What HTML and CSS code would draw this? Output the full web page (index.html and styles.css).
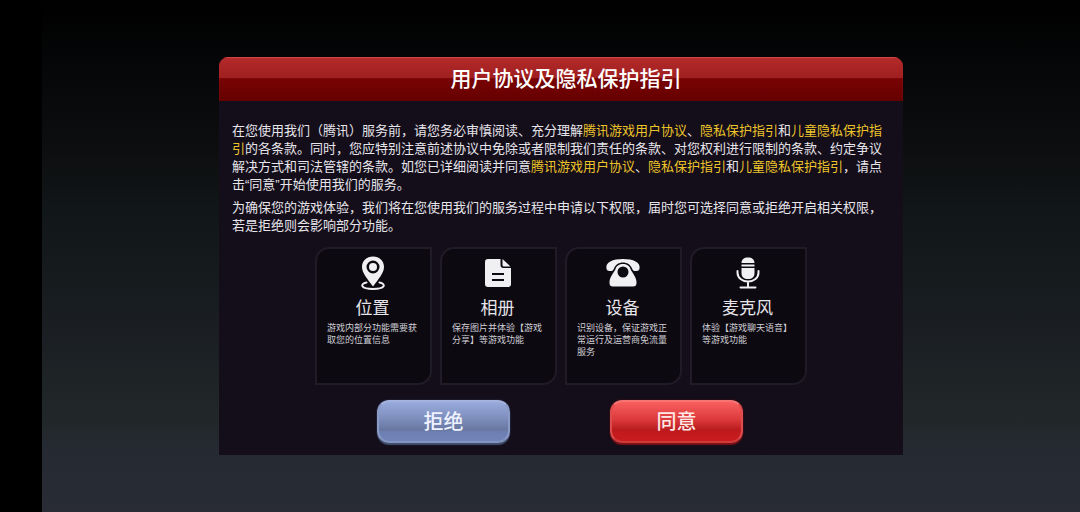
FILE: index.html
```
<!DOCTYPE html>
<html lang="zh-CN">
<head>
	<meta charset="utf-8">
	<meta name="viewport" content="width=device-width, initial-scale=1">
	<title>用户协议及隐私保护指引</title>
	<link rel="stylesheet" href="styles.css">
</head>
<body>

<main class="stage">
	<section class="dialog" role="dialog" aria-labelledby="dialogTitle">
		<h1 class="dialog-title" id="dialogTitle">用户协议及隐私保护指引</h1>

		<div class="dialog-body">
			<p>在您使用我们（腾讯）服务前，请您务必审慎阅读、充分理解<a href="#user">腾讯游戏用户协议</a>、<a href="#privacy">隐私保护指引</a>和<a href="#children">儿童隐私保护指引</a>的各条款。同时，您应特别注意前述协议中免除或者限制我们责任的条款、对您权利进行限制的条款、约定争议解决方式和司法管辖的条款。如您已详细阅读并同意<a href="#user">腾讯游戏用户协议</a>、<a href="#privacy">隐私保护指引</a>和<a href="#children">儿童隐私保护指引</a>，请点击“同意”开始使用我们的服务。</p>
			<p>为确保您的游戏体验，我们将在您使用我们的服务过程中申请以下权限，届时您可选择同意或拒绝开启相关权限，若是拒绝则会影响部分功能。</p>

			<ul class="cards">
				<li class="card">
					<svg class="icon" viewBox="0 0 36 36">
						<path fill-rule="evenodd" d="M18 1.500C11.500 1.500 7 6 7 12C7 18 12.500 24 18 31.500C23.500 24 29 18 29 12C29 6 24.500 1.500 18 1.500ZM18 5.500a6.500 6.500 0 1 1 0 13a6.500 6.500 0 1 1 0-13Z"/>
						<circle cx="18" cy="12" r="4"/>
						<path class="line" d="M11.500 27.500C4.500 29 5.500 34 18 34S31.500 29 24.500 27.500"/>
					</svg>
					<h2>位置</h2>
					<p>游戏内部分功能需要获取您的位置信息</p>
				</li>
				<li class="card">
					<svg class="icon" viewBox="0 0 36 36">
						<path d="M8 4H20.500V10C20.500 12 21.500 13 23.500 13H31V29Q31 32 28 32H8Q5 32 5 29V7Q5 4 8 4Z"/>
						<path d="M22.500 4L30.500 11.500H24Q22.500 11.500 22.500 10Z"/>
						<path class="cut" d="M12 19H24M12 25H24"/>
					</svg>
					<h2>相册</h2>
					<p>保存图片并体验【游戏分享】等游戏功能</p>
				</li>
				<li class="card">
					<svg class="icon" viewBox="0 0 36 36">
						<path d="M1.500 14C0 7 8 4 18 4S36 7 34.500 14Q34 16 31.500 16H29.500Q28 16 27 13.500C25.500 9.500 22 7.500 18 7.500S10.500 9.500 9 13.500Q8 16 6.500 16H4.500Q2 16 1.500 14Z"/>
						<path fill-rule="evenodd" d="M10.500 14C11.500 10.500 14.500 9 18 9S24.500 10.500 25.500 14C26.500 17 31.500 22 31.500 27V28Q31.500 31.500 28 31.500H8Q4.500 31.500 4.500 28V27C4.500 22 9.500 17 10.500 14ZM18 11.500a5.500 5.500 0 1 0 0 11a5.500 5.500 0 1 0 0-11Z"/>
					</svg>
					<h2>设备</h2>
					<p>识别设备，保证游戏正常运行及运营商免流量服务</p>
				</li>
				<li class="card">
					<svg class="icon" viewBox="0 0 36 36">
						<path d="M11.500 8C11.500 4.500 14 2.500 18 2.500S24.500 4.500 24.500 8ZM11.500 9.500H24.500V11.500H11.500ZM11.500 13H24.500V18C24.500 22 22 24 18 24S11.500 22 11.500 18Z"/>
						<path class="line" d="M7.500 16V17.500C7.500 23 12 26.500 18 26.500S28.500 23 28.500 17.500V16M18 26.500V32M10.500 32.500H25.500"/>
					</svg>
					<h2>麦克风</h2>
					<p>体验【游戏聊天语音】等游戏功能</p>
				</li>
			</ul>

			<div class="actions">
				<button class="button refuse" type="button">拒绝</button>
				<button class="button agree" type="button">同意</button>
			</div>
		</div>
	</section>
</main>

</body>
</html>
```
FILE: styles.css
```
* {
	box-sizing: border-box;
}

body {
	margin: 0;
	padding-left: 42px;
	background-color: #000;
	color: #e6e5ea;
	font-family: "Liberation Sans", "Noto Sans CJK SC", sans-serif;
}

h1, h2, p, ul {
	margin: 0;
	padding: 0;
}

a {
	color: #ecc42a;
	text-decoration: none;
}

.stage {
	display: flex;
	align-items: center;
	justify-content: center;
	min-height: 100vh;
	background: linear-gradient(#000 0%, #050607 12%, #0d0e0f 29%, #111618 41%, #1b1f23 66%, #22282a 83%, #252931 87%, #292c35 100%);
}

.dialog {
	width: 65%;
	min-width: 684px;
	border-radius: 9px 9px 0 0;
	background-color: #140d1a;
	overflow: hidden;
}

.dialog-title {
	height: 44px;
	padding-left: 10px;
	font-size: 21px;
	font-weight: 500;
	line-height: 44px;
	text-align: center;
	color: #fff;
	background: linear-gradient(#b52a2a 0%, #9f1f20 48%, #790304 49%, #650000 100%);
	box-shadow: inset 0 1px 1px #d34848;
}

.dialog-body {
	padding: 21px 13px 12px;
}

.dialog-body > p {
	font-size: 13px;
	line-height: 18px;
}

.dialog-body > p + p {
	margin-top: 5px;
}

.cards {
	display: flex;
	justify-content: center;
	gap: 8px;
	margin-top: 12px;
	list-style: none;
}

.card {
	width: 117px;
	min-height: 138px;
	padding: 6px 12px 6px 10px;
	border: 2px solid #211b28;
	border-radius: 14px 0 14px 0;
	background-color: #0d0911;
	text-align: center;
}

.card h2 {
	font-size: 17px;
	font-weight: 400;
	line-height: 26px;
}

.card p {
	font-size: 9px;
	line-height: 12px;
	text-align: left;
	color: #d0cfd5;
}

.icon {
	display: block;
	width: 36px;
	height: 36px;
	margin: 0 auto 5px;
	fill: #f0f0f3;
}

.icon .line {
	fill: none;
	stroke: #f0f0f3;
	stroke-width: 2;
	stroke-linecap: round;
}

.icon .cut {
	fill: none;
	stroke: #0d0911;
	stroke-width: 2;
}

.actions {
	display: flex;
	justify-content: center;
	gap: 100px;
	margin-top: 15px;
	padding-right: 2px;
}

.button {
	width: 133px;
	height: 43px;
	padding: 0 0 2px;
	border: 2px solid;
	border-radius: 12px;
	font-family: inherit;
	font-size: 20px;
	font-weight: 500;
	cursor: pointer;
}

.refuse {
	color: #eef2ff;
	border-color: #a3b3de #8b9bc8 #8293bd;
	background: linear-gradient(#98abdc 0%, #7c8cbb 45%, #67779f 72%, #6d7fb2 76%, #7285ba 100%);
	box-shadow: 0 2px 1px #42506f, 0 0 2px #333d57;
}

.agree {
	color: #ffe9e6;
	border-color: #f67474 #dd4d4d #cf3b3b;
	background: linear-gradient(#f85f5f 0%, #dc3a3b 45%, #b91b1e 72%, #c1191c 76%, #c91d20 100%);
	box-shadow: 0 2px 1px #7c1216, 0 0 2px #5a1216;
}
```
